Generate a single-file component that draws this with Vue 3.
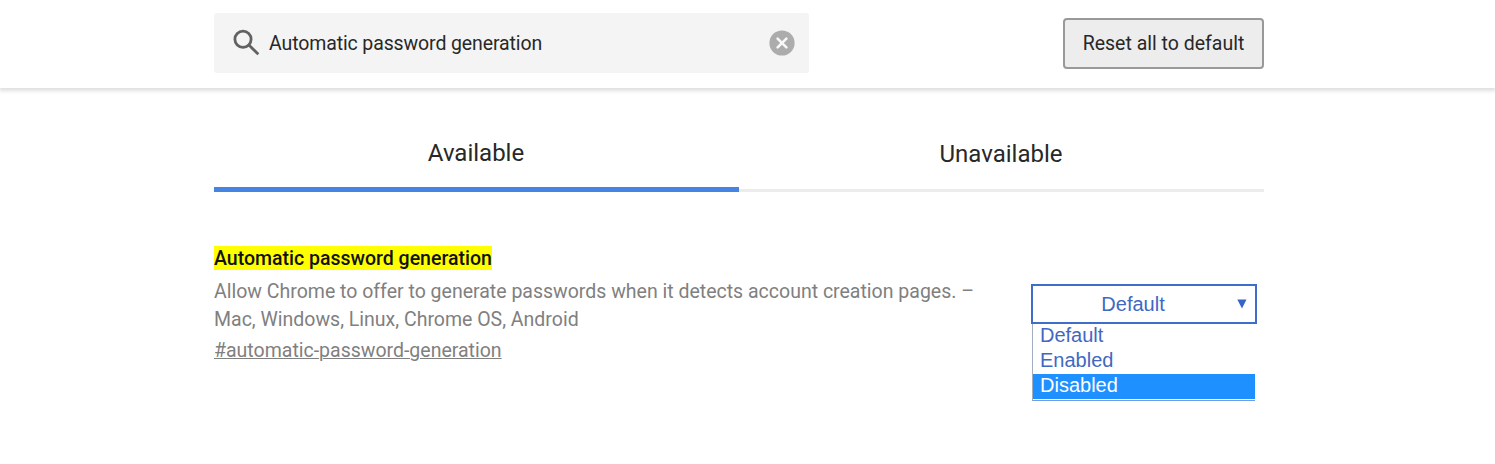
<script setup>
import { ref } from 'vue'

const query = ref('Automatic password generation')
const options = ['Default', 'Enabled', 'Disabled']
const highlighted = ref('Disabled')
</script>

<template>
  <div class="page">
    <header class="header">
      <div class="search">
        <svg class="magnifier" viewBox="0 0 28 28" width="28" height="28">
          <circle cx="11" cy="10.2" r="8.1" />
          <path d="M16.6 15.8L26.3 25.2" />
        </svg>
        <span class="query">{{ query }}</span>
        <svg class="clear" viewBox="0 0 26 26" width="26" height="26">
          <circle cx="13" cy="13" r="12.6" />
          <path d="M8.6 8.6L17.4 17.4M17.4 8.6L8.6 17.4" />
        </svg>
      </div>
      <button class="reset">Reset all to default</button>
    </header>

    <nav class="tabs">
      <div class="tab active">Available</div>
      <div class="tab">Unavailable</div>
    </nav>

    <main class="experiment">
      <section class="info">
        <h3 class="title"><mark>Automatic password generation</mark></h3>
        <p class="description">
          Allow Chrome to offer to generate passwords when it detects account creation pages. –<br />
          Mac, Windows, Linux, Chrome OS, Android
        </p>
        <a class="permalink">#automatic-password-generation</a>
      </section>
      <div class="select">
        <div class="control">
          <span class="value">Default</span>
          <svg class="arrow" viewBox="0 0 10 10" width="10" height="10"><path d="M0.3 0.5H9.5L5 9.5Z" /></svg>
        </div>
        <ul class="menu">
          <li v-for="o in options" :key="o" :class="{ highlighted: o === highlighted }">{{ o }}</li>
        </ul>
      </div>
    </main>
  </div>
</template>

<style>
body {
  background: #fff;
  overflow: hidden;
}
</style>

<style scoped>
.page {
  height: 464px;
  font-family: Roboto, "Liberation Sans", sans-serif;
  font-size: 19.5px;
  color: #282828;
  background: #fff;
}
.header {
  box-sizing: border-box;
  height: 88px;
  padding: 13px 231px 15px 214px;
  display: flex;
  justify-content: space-between;
  box-shadow: 0 2px 4px 1px rgba(0, 0, 0, 0.13);
}
.search {
  box-sizing: border-box;
  width: 595px;
  height: 60px;
  padding: 0 14px 0 18px;
  display: flex;
  align-items: center;
  background: #f4f4f4;
  border-radius: 3px;
}
.magnifier {
  fill: none;
  stroke: #626262;
  stroke-width: 2.8;
}
.query {
  margin-left: 9px;
  flex: 1;
  white-space: nowrap;
  letter-spacing: -0.12px;
}
.clear {
  fill: #acacac;
}
.clear path {
  stroke: #f8f8f8;
  stroke-width: 2.6;
  stroke-linecap: round;
}
.reset {
  box-sizing: border-box;
  width: 201px;
  height: 51px;
  margin-top: 5px;
  padding: 0 0 1px;
  border: 2px solid #999;
  border-radius: 4px;
  background: #ededed;
  color: #282828;
  font: inherit;
  white-space: nowrap;
}
.tabs {
  width: 1050px;
  height: 104px;
  margin-left: 214px;
  display: flex;
}
.tab {
  box-sizing: border-box;
  width: 525px;
  padding-top: 51px;
  padding-right: 1px;
  border-bottom: 3px solid #ececec;
  text-align: center;
  font-size: 24px;
  line-height: 30px;
}
.tab.active {
  padding-top: 50px;
  border-bottom: 5px solid #4684e2;
}
.experiment {
  display: flex;
  margin-left: 214px;
}
.info {
  width: 817px;
  padding-top: 54px;
}
.title {
  margin: 0;
  font-size: 19.5px;
  font-weight: 500;
  line-height: 26px;
  color: #111;
}
mark {
  display: inline-block;
  height: 24px;
  background: #ff0;
  color: inherit;
}
.description {
  margin: 6px 0 0;
  line-height: 28px;
  color: #808080;
  white-space: nowrap;
}
.permalink {
  display: inline-block;
  margin-top: 3px;
  line-height: 28px;
  color: #808080;
  text-decoration: underline;
  text-decoration-thickness: 1px;
}
.select {
  width: 226px;
  padding-top: 92px;
  font-family: "Liberation Sans", Arial, sans-serif;
  font-size: 20px;
  color: #4267c3;
}
.control {
  box-sizing: border-box;
  height: 40px;
  padding-right: 8px;
  border: 2px solid #3f6dcb;
  display: flex;
  align-items: center;
}
.value {
  flex: 1;
  margin-right: 4px;
  text-align: center;
}
.arrow {
  fill: #3565c8;
}
.menu {
  list-style: none;
  box-sizing: border-box;
  width: 223px;
  height: 77px;
  margin: 0 0 0 1px;
  padding: 0;
  border-left: 1px solid #a3adc0;
  border-bottom: 1px solid #6f9fd6;
}
.menu li {
  height: 25px;
  padding-left: 7px;
  line-height: 23px;
}
.menu li.highlighted {
  background: #1e90ff;
  color: #fff;
}
</style>
